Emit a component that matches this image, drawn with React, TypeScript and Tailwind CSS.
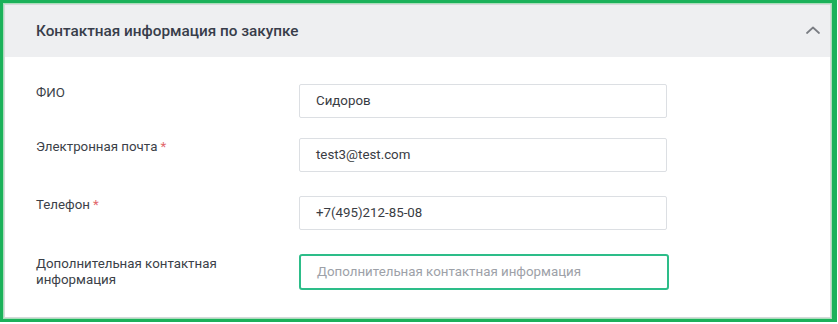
export default function App() {
  const rows = [
    { label: "ФИО", value: "Сидоров", required: false, top: "mt-[27px]" },
    { label: "Электронная почта", value: "test3@test.com", required: true, top: "mt-[20px]" },
    { label: "Телефон", value: "+7(495)212-85-08", required: true, top: "mt-[24px]" },
  ];

  return (
    <div
      className="w-[838px] h-[324px] bg-white pr-px pb-[2px]"
      style={{ fontFamily: "Roboto, 'Liberation Sans', sans-serif" }}
    >
      <div className="h-full border-[3px] border-r-[5px] border-[#1bb15a] bg-[#a9dfba] p-px">
        <div className="h-full border border-[#d6d8db] bg-white flex flex-col">
          <div className="h-[52px] bg-[#eeeff1] flex items-center justify-between pl-[31px] pr-[10px] shrink-0">
            <span className="text-[15.3px] font-medium text-[#383d4a]">
              Контактная информация по закупке
            </span>
            <svg width="14" height="8" viewBox="0 0 14 8" fill="none" className="mb-[2px]">
              <path d="M1 7 L7 1.5 L13 7" stroke="#7a7d83" strokeWidth="1.7" strokeLinecap="round" strokeLinejoin="round" />
            </svg>
          </div>

          <div className="pl-[31px]">
            {rows.map((row) => (
              <div key={row.label} className={`flex ${row.top}`}>
                <div className="w-[263px] pt-[1px] text-[13.3px] leading-[16px] text-[#3b3f48]">
                  {row.label}
                  {row.required && <span className="text-[#e2676b] ml-[3px]">*</span>}
                </div>
                <div className="w-[368px] h-[34px] border border-[#dcdfe3] rounded-[2px] flex items-center pl-[16px] text-[13.3px] text-[#393c43]">
                  {row.value}
                </div>
              </div>
            ))}

            <div className="flex mt-[24px]">
              <div className="w-[263px] pt-[2px] text-[13.3px] leading-[16px] text-[#3b3f48]">
                Дополнительная контактная
                <br />
                информация
              </div>
              <div className="w-[370px] h-[36px] border-2 border-[#2dbd89] rounded-[3px] flex items-center pl-[16px] text-[13.3px] text-[#9da1a8]">
                Дополнительная контактная информация
              </div>
            </div>
          </div>
        </div>
      </div>
    </div>
  );
}
